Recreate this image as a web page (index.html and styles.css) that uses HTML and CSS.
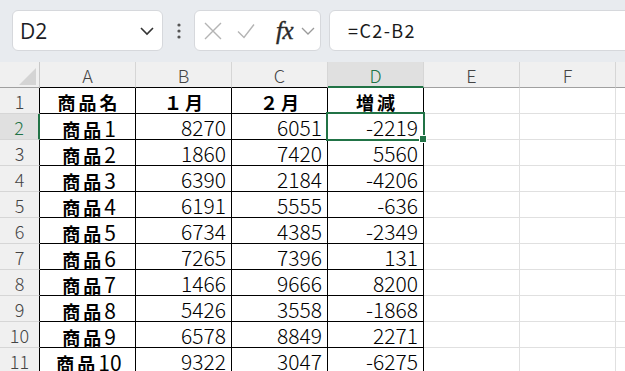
FILE: index.html
```html
<!DOCTYPE html>
<html>
  <head>
    <meta charset="utf-8" />
    <title>Book1</title>
    <link rel="stylesheet" href="styles.css">
  </head>
  <body>
    <div class="toolbar">
      <div class="namebox">
        <span class="ref">D2</span>
        <svg class="chev" width="16" height="10" viewBox="0 0 16 10"><path d="M2 2l6 6 6-6" fill="none" stroke="#333" stroke-width="1.6"/></svg>
      </div>
      <div class="grip">
        <svg width="6" height="18" viewBox="0 0 6 18"><circle cx="3" cy="3" r="1.6" fill="#555"/><circle cx="3" cy="9" r="1.6" fill="#555"/><circle cx="3" cy="15" r="1.6" fill="#555"/></svg>
      </div>
      <div class="fxbox">
        <svg class="ico" width="18" height="18" viewBox="0 0 18 18"><path d="M1 1l16 16M17 1L1 17" fill="none" stroke="#b4b4b4" stroke-width="1.4"/></svg>
        <svg class="ico" width="18" height="16" viewBox="0 0 18 16"><path d="M1 8.5l6 6 10-13" fill="none" stroke="#b4b4b4" stroke-width="1.4"/></svg>
        <span class="fx">fx</span>
        <svg class="chev2" width="14" height="8" viewBox="0 0 14 8"><path d="M1 1l6 6 6-6" fill="none" stroke="#9a9a9a" stroke-width="1.3"/></svg>
      </div>
      <div class="formula">=C2-B2</div>
    </div>

    <div class="sheet">
      <div class="row head">
        <div class="rh corner"><span class="tri"></span></div>
        <div class="ch t">A</div><div class="ch t">B</div><div class="ch t">C</div><div class="ch t sel">D</div><div class="ch">E</div><div class="ch">F</div><div class="ch">G</div>
      </div>
      <div class="row">
        <div class="rh">1</div>
        <div class="c t k">商品名</div><div class="c t k">１月</div><div class="c t k">２月</div><div class="c t k">増減</div><div class="c"></div><div class="c"></div><div class="c"></div>
      </div>
      <div class="row">
        <div class="rh on">2</div>
        <div class="c t k">商品<span class="d">1</span></div><div class="c t n">8270</div><div class="c t n">6051</div><div class="c t n active">-2219</div><div class="c"></div><div class="c"></div><div class="c"></div>
      </div>
      <div class="row">
        <div class="rh">3</div>
        <div class="c t k">商品<span class="d">2</span></div><div class="c t n">1860</div><div class="c t n">7420</div><div class="c t n">5560</div><div class="c"></div><div class="c"></div><div class="c"></div>
      </div>
      <div class="row">
        <div class="rh">4</div>
        <div class="c t k">商品<span class="d">3</span></div><div class="c t n">6390</div><div class="c t n">2184</div><div class="c t n">-4206</div><div class="c"></div><div class="c"></div><div class="c"></div>
      </div>
      <div class="row">
        <div class="rh">5</div>
        <div class="c t k">商品<span class="d">4</span></div><div class="c t n">6191</div><div class="c t n">5555</div><div class="c t n">-636</div><div class="c"></div><div class="c"></div><div class="c"></div>
      </div>
      <div class="row">
        <div class="rh">6</div>
        <div class="c t k">商品<span class="d">5</span></div><div class="c t n">6734</div><div class="c t n">4385</div><div class="c t n">-2349</div><div class="c"></div><div class="c"></div><div class="c"></div>
      </div>
      <div class="row">
        <div class="rh">7</div>
        <div class="c t k">商品<span class="d">6</span></div><div class="c t n">7265</div><div class="c t n">7396</div><div class="c t n">131</div><div class="c"></div><div class="c"></div><div class="c"></div>
      </div>
      <div class="row">
        <div class="rh">8</div>
        <div class="c t k">商品<span class="d">7</span></div><div class="c t n">1466</div><div class="c t n">9666</div><div class="c t n">8200</div><div class="c"></div><div class="c"></div><div class="c"></div>
      </div>
      <div class="row">
        <div class="rh">9</div>
        <div class="c t k">商品<span class="d">8</span></div><div class="c t n">5426</div><div class="c t n">3558</div><div class="c t n">-1868</div><div class="c"></div><div class="c"></div><div class="c"></div>
      </div>
      <div class="row">
        <div class="rh">10</div>
        <div class="c t k">商品<span class="d">9</span></div><div class="c t n">6578</div><div class="c t n">8849</div><div class="c t n">2271</div><div class="c"></div><div class="c"></div><div class="c"></div>
      </div>
      <div class="row">
        <div class="rh">11</div>
        <div class="c t k">商品<span class="d">10</span></div><div class="c t n">9322</div><div class="c t n">3047</div><div class="c t n">-6275</div><div class="c"></div><div class="c"></div><div class="c"></div>
      </div>
    </div>
  </body>
</html>
```

FILE: styles.css
```css
/* base */
html,body{margin:0;padding:0;height:100%;}
body{background:#e8ebef;overflow:hidden;font-family:"Noto Sans CJK JP","Noto Sans",sans-serif;}

/* toolbar */
.toolbar{display:flex;align-items:center;height:62px;padding:0 0 0 12px;box-sizing:border-box;}
.namebox{display:flex;align-items:center;justify-content:space-between;width:151px;height:41px;box-sizing:border-box;
	margin-top:-1px;padding:0 7px 0 7px;background:#fff;border:1px solid #d6d8dc;border-radius:6px;}
.ref{font-family:"Open Sans","Noto Sans",sans-serif;font-size:21px;color:#1c1c24;}
.grip{display:flex;align-items:center;justify-content:center;width:31px;height:41px;margin-top:-1px;}
.fxbox{display:flex;align-items:center;width:127px;height:41px;box-sizing:border-box;margin-top:-1px;
	padding:0 5px 0 9px;background:#fff;border:1px solid #d6d8dc;border-radius:6px;}
.fxbox .ico{margin-right:15px;}
.fx{font-family:"Liberation Serif",serif;font-style:italic;font-size:25px;color:#2a2a2a;letter-spacing:-0.5px;margin-left:6px;-webkit-text-stroke:0.4px #2a2a2a;}
.chev2{margin-left:8px;}
.formula{flex:1;height:41px;box-sizing:border-box;margin:-1px -20px 0 8px;padding:0 0 0 18px;line-height:39px;
	background:#fff;border:1px solid #d6d8dc;border-radius:6px;font-size:18px;color:#1a1a1a;letter-spacing:1.4px;}

/* sheet */
.sheet{background:#fff;}
.row{display:flex;height:26px;}
.rh{flex:none;width:40px;box-sizing:border-box;background:#f0f0f0;border-right:1px solid #000;border-bottom:1px solid #d6d6d6;
	text-align:center;font-size:18px;font-weight:300;line-height:27px;color:#444;}
.rh.on{background:#e0e0e0;color:#217346;border-right:2px solid #217346;}
.c,.ch{flex:none;width:96px;box-sizing:border-box;border-right:1px solid #e0e0e0;border-bottom:1px solid #e0e0e0;white-space:nowrap;}
.c.t{border-right-color:#000;border-bottom-color:#000;}

.head{background:#f0f0f0;}
.corner{display:flex;align-items:flex-end;justify-content:flex-end;border-right:1px solid #c8c8c8;border-bottom:1px solid #a0a0a0;padding:0 3px 2px 0;}
.tri{width:17px;height:17px;background:#d4d4d4;clip-path:polygon(100% 0,100% 100%,0 100%);}
.ch{background:#f0f0f0;border-right-color:#d6d6d6;border-bottom-color:#a0a0a0;text-align:center;
	font-size:18px;font-weight:300;line-height:26px;color:#444;}
.ch.t{border-bottom-color:#000;}
.ch.sel{background:#e0e0e0;color:#217346;border-bottom:2px solid #217346;}

.k{text-align:center;font-size:18px;font-weight:600;line-height:28px;letter-spacing:3px;text-indent:3px;color:#000;}
.k .d{font-size:21px;font-weight:400;letter-spacing:0;}
.n{text-align:right;padding-right:5px;font-size:21px;font-weight:300;line-height:27px;color:#000;}

/* active cell */
.active{position:relative;}
.active:after{content:"";position:absolute;left:-2px;top:-2px;right:-2px;bottom:-2px;border:2px solid #217346;}
.active:before{content:"";position:absolute;right:-4px;bottom:-4px;width:6px;height:6px;background:#217346;border:1px solid #fff;z-index:1;}
```
